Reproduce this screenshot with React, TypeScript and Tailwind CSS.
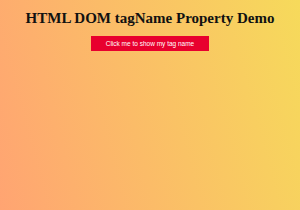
export default function App() {
  return (
    <div className="w-[300px] h-[210px] bg-[linear-gradient(75deg,#ffa472,#f6da5b)] flex flex-col items-center">
      <h1 className="mt-[10px] text-[15px] leading-[17px] font-bold text-[#111] whitespace-nowrap [font-family:'Liberation_Serif',serif]">
        HTML DOM tagName Property Demo
      </h1>
      <button className="mt-[9px] w-[118px] h-[15px] bg-[#e8002e] text-white text-[6.5px] leading-[15px] [font-family:'Liberation_Sans',sans-serif]">
        Click me to show my tag name
      </button>
    </div>
  );
}
